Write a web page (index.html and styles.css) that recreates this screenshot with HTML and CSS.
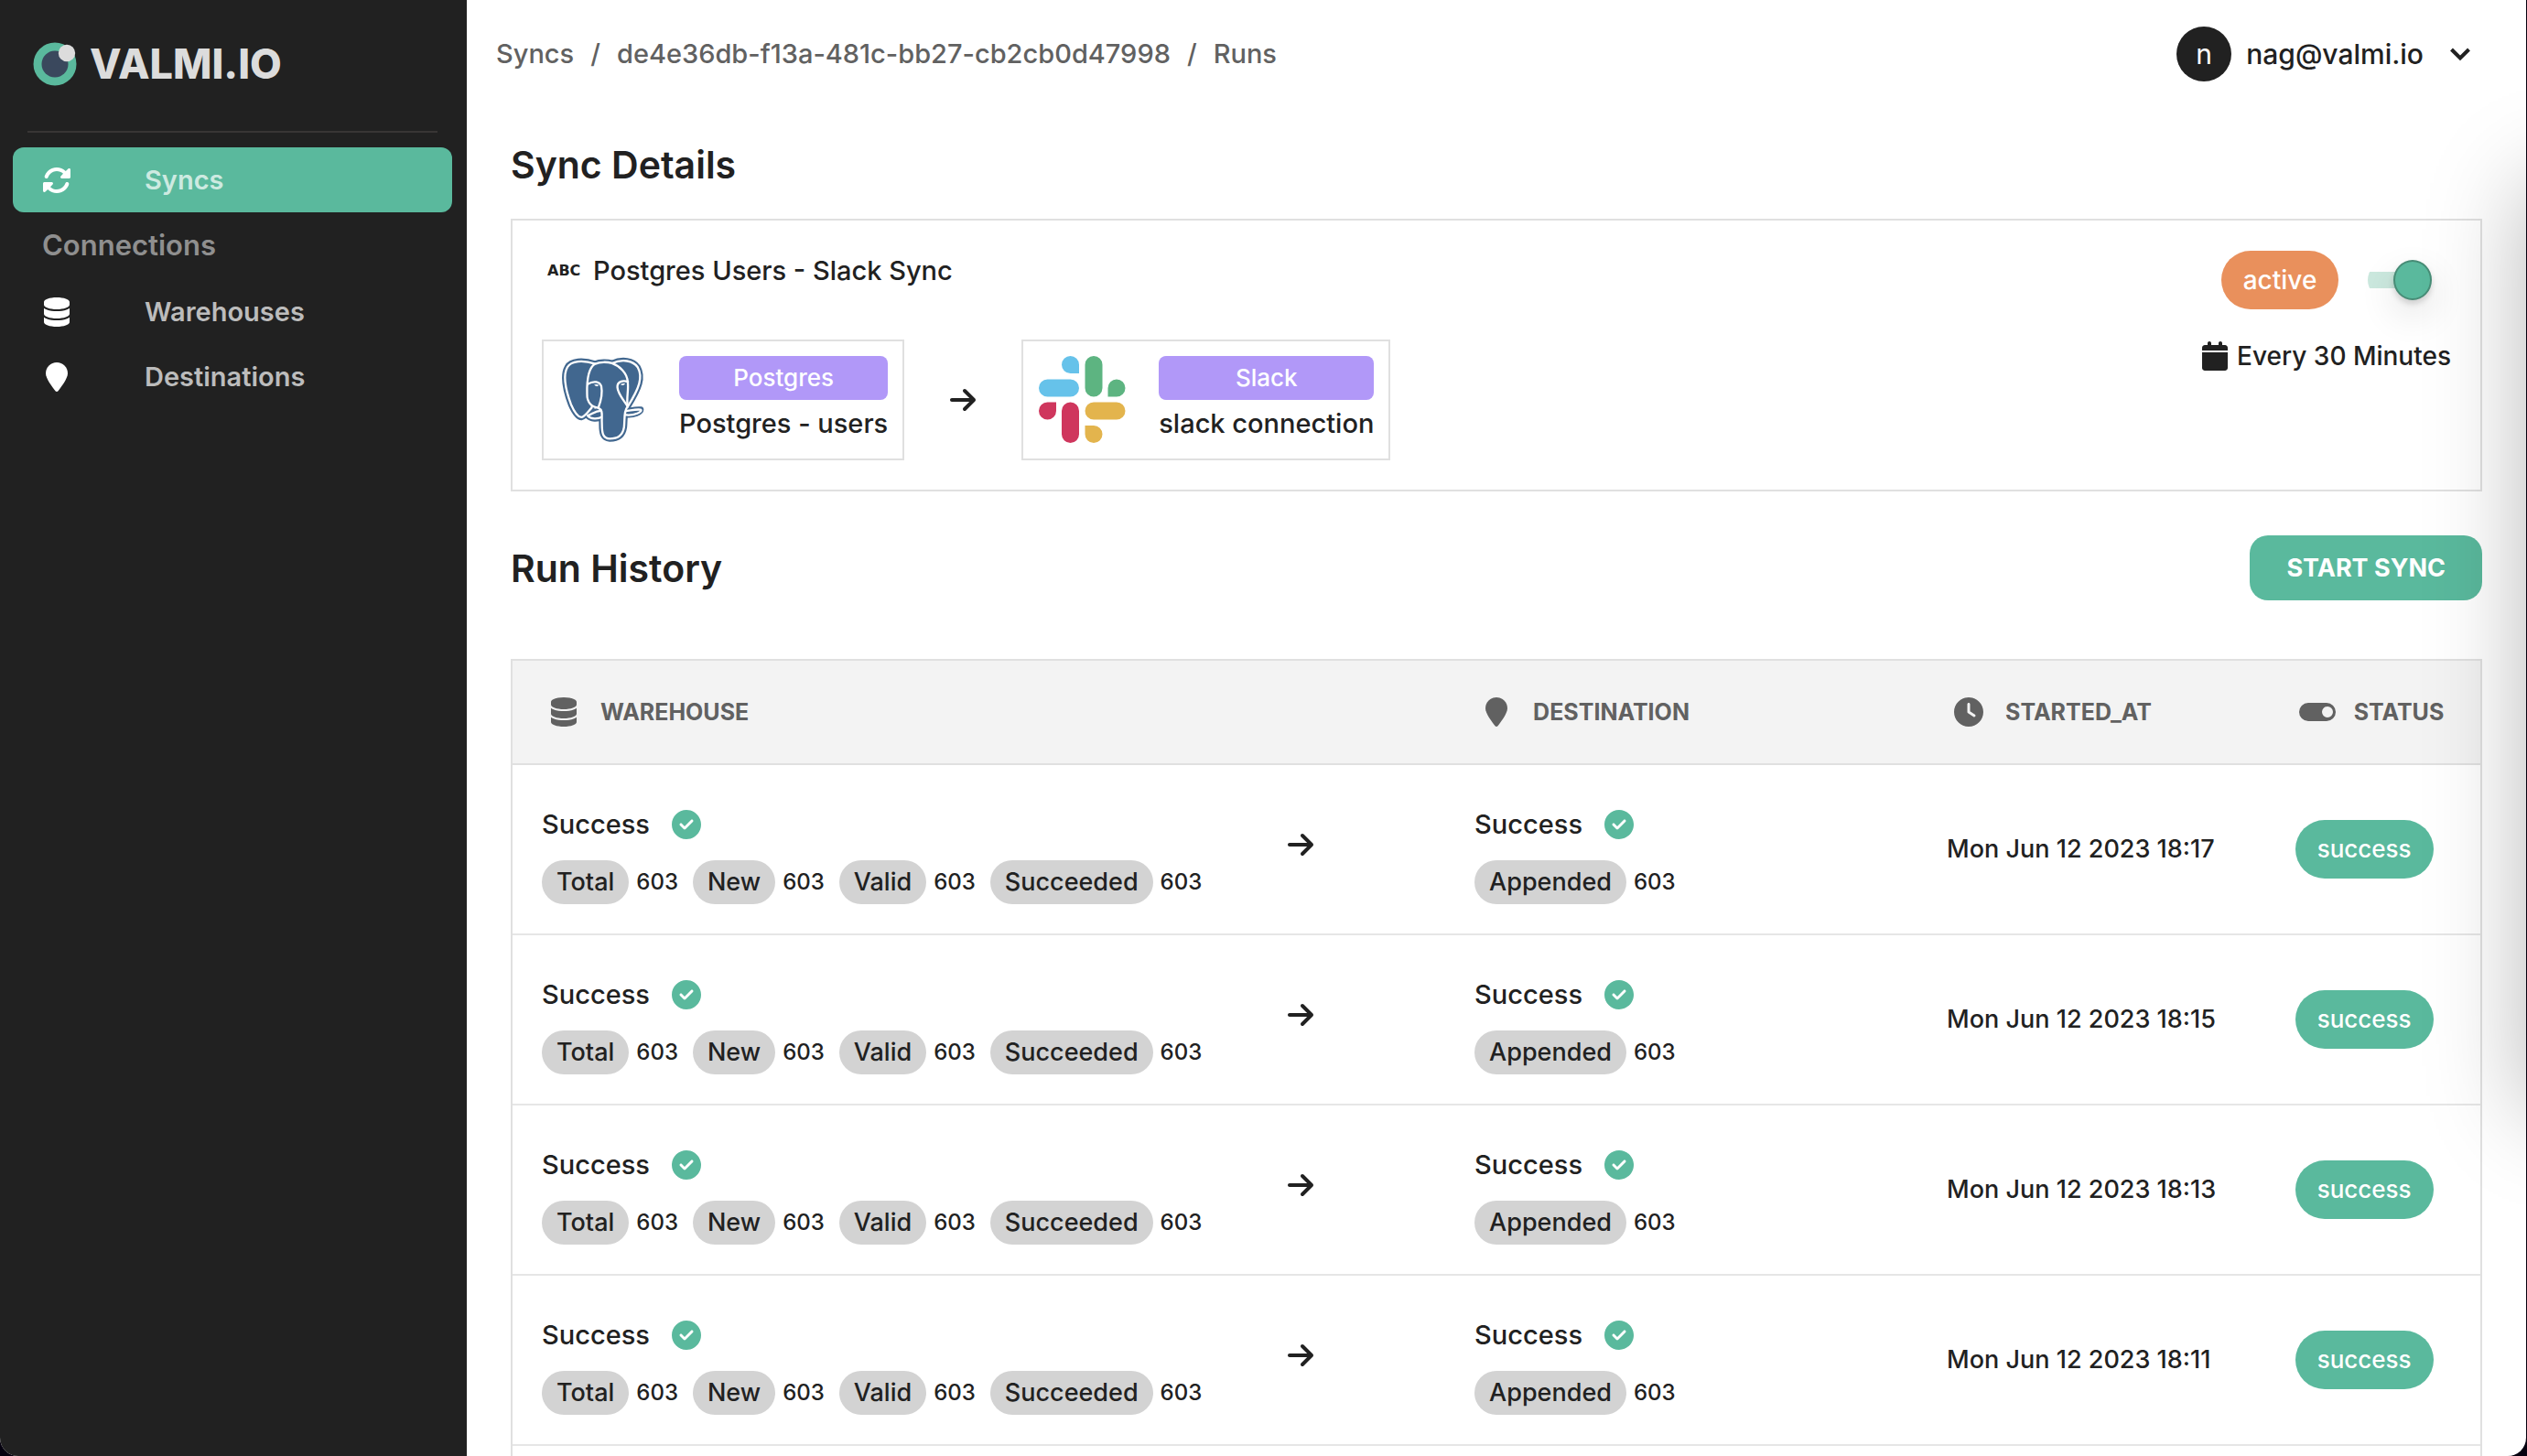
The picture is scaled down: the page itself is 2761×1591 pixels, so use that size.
FILE: index.html
```html
<!DOCTYPE html>
<html lang="en">
<head>
  <meta charset="UTF-8">
  <meta name="viewport" content="width=device-width, initial-scale=1.0">
  <title>valmi.io</title>
  <link rel="stylesheet" href="styles.css">
</head>
<body>

  <!-- icon sprite -->
  <svg class="sprite">
    <symbol id="icon-sync" viewBox="0 0 512 512">
      <path d="M142.9 142.9c62.2-62.2 162.7-62.5 225.3-1L327 183c-6.9 6.9-8.9 17.2-5.2 26.2s12.5 14.8 22.2 14.8H472c13.3 0 24-10.7 24-24V72c0-9.7-5.8-18.5-14.8-22.2s-19.3-1.7-26.2 5.2L413.4 96.6c-87.6-86.5-228.7-86.2-315.8 1C73.2 122 55.6 150.7 44.8 181.4c-5.9 16.7 2.9 34.9 19.5 40.8s34.9-2.9 40.8-19.5c7.7-21.8 20.2-42.3 37.8-59.8zM16 312V440c0 9.7 5.8 18.5 14.8 22.2s19.3 1.7 26.2-5.2l41.6-41.6c87.6 86.5 228.7 86.2 315.8-1c24.4-24.4 42.1-53.1 52.9-83.7c5.9-16.7-2.9-34.9-19.5-40.8s-34.9 2.9-40.8 19.5c-7.7 21.8-20.2 42.3-37.8 59.8c-62.2 62.2-162.7 62.5-225.3 1L185 329c6.9-6.9 8.9-17.2 5.2-26.2s-12.5-14.8-22.2-14.8H40c-13.3 0-24 10.7-24 24z"/>
    </symbol>
    <symbol id="icon-database" viewBox="0 0 448 512">
      <path d="M448 80v48c0 44.2-100.3 80-224 80S0 172.2 0 128V80C0 35.8 100.3 0 224 0S448 35.8 448 80zM393.2 214.7c20.8-7.4 39.9-16.9 54.8-28.6V288c0 44.2-100.3 80-224 80S0 332.2 0 288V186.1c14.9 11.8 34 21.2 54.8 28.6C99.7 230.7 159.5 240 224 240s124.3-9.3 169.2-25.3zM0 346.1c14.9 11.8 34 21.2 54.8 28.6C99.7 390.7 159.5 400 224 400s124.3-9.3 169.2-25.3c20.8-7.4 39.9-16.9 54.8-28.6V432c0 44.2-100.3 80-224 80S0 476.2 0 432V346.1z"/>
    </symbol>
    <symbol id="icon-pin" viewBox="0 0 384 512">
      <path d="M384 192c0 87.4-117 243-168.3 307.2c-12.3 15.3-35.1 15.3-47.4 0C117 435 0 279.4 0 192C0 86 86 0 192 0S384 86 384 192z"/>
    </symbol>
    <symbol id="icon-arrow" viewBox="0 0 448 512">
      <path d="M438.6 278.6c12.5-12.5 12.5-32.8 0-45.3l-160-160c-12.5-12.5-32.8-12.5-45.3 0s-12.5 32.8 0 45.3L338.8 224 32 224c-17.7 0-32 14.3-32 32s14.3 32 32 32l306.7 0L233.4 393.4c-12.5 12.5-12.5 32.8 0 45.3s32.8 12.5 45.3 0l160-160z"/>
    </symbol>
    <symbol id="icon-calendar" viewBox="0 0 448 512">
      <path d="M96 32V64H48C21.5 64 0 85.5 0 112v48H448V112c0-26.5-21.5-48-48-48H352V32c0-17.7-14.3-32-32-32s-32 14.3-32 32V64H160V32c0-17.7-14.3-32-32-32S96 14.3 96 32zM448 192H0V464c0 26.5 21.5 48 48 48H400c26.5 0 48-21.5 48-48V192z"/>
    </symbol>
    <symbol id="icon-clock" viewBox="0 0 512 512">
      <path fill-rule="evenodd" d="M256 512C114.6 512 0 397.4 0 256S114.6 0 256 0S512 114.6 512 256s-114.6 256-256 256zM232 120V256c0 8 4 15.5 10.7 20l96 64c11 7.4 25.9 4.4 33.3-6.7s4.4-25.9-6.7-33.3L280 243.2V120c0-13.3-10.7-24-24-24s-24 10.7-24 24z"/>
    </symbol>
    <symbol id="icon-toggle" viewBox="0 0 40 32">
      <path fill-rule="evenodd" d="M10 6H30a10 10 0 0 1 0 20H10a10 10 0 0 1 0-20zM31 10a6 6 0 1 0 0 12a6 6 0 1 0 0-12z"/>
    </symbol>
    <symbol id="icon-check" viewBox="0 0 512 512">
      <path fill-rule="evenodd" d="M256 512c141.4 0 256-114.6 256-256S397.4 0 256 0S0 114.6 0 256S114.6 512 256 512zM369 209L241 337c-9.4 9.4-24.6 9.4-33.9 0l-64-64c-9.4-9.4-9.4-24.6 0-33.9s24.6-9.4 33.9 0l47 47L335 175c9.4-9.4 24.6-9.4 33.9 0s9.4 24.6 0 33.9z"/>
    </symbol>
  </svg>

  <div class="window">
    <aside class="sidebar">
      <a class="logo" href="#">
        <svg class="logo-mark" viewBox="0 0 48 48">
          <circle cx="24" cy="24" r="23.5" fill="#5ab99d"/>
          <circle cx="24" cy="24" r="14.5" fill="#3a485d"/>
          <circle cx="37" cy="12" r="9.2" fill="#dcdcdc"/>
        </svg>
        <span class="logo-text">VALMI.IO</span>
      </a>

      <nav class="menu">
        <a class="menu-item active" href="#">
          <span class="menu-icon"><svg class="icon"><use href="#icon-sync"/></svg></span>
          Syncs
        </a>
        <p class="menu-title">Connections</p>
        <a class="menu-item" href="#">
          <span class="menu-icon"><svg class="icon icon-28"><use href="#icon-database"/></svg></span>
          Warehouses
        </a>
        <a class="menu-item" href="#">
          <span class="menu-icon"><svg class="icon icon-24"><use href="#icon-pin"/></svg></span>
          Destinations
        </a>
      </nav>
    </aside>

    <div class="page">
      <header class="topbar">
        <nav class="breadcrumb">
          <a href="#">Syncs</a>
          <span>/</span>
          <a href="#">de4e36db-f13a-481c-bb27-cb2cb0d47998</a>
          <span>/</span>
          <a href="#">Runs</a>
        </nav>
        <button class="account">
          <span class="avatar">n</span>
          nag@valmi.io
          <svg class="chevron" viewBox="0 0 24 24"><path d="M2.500 7L12 16.500L21.500 7"/></svg>
        </button>
      </header>

      <main class="content">
        <h2>Sync Details</h2>

        <section class="card">
          <div>
            <p class="sync-name"><span class="abc">ABC</span>Postgres Users - Slack Sync</p>
            <div class="flow">
              <div class="connector">
                <svg class="connector-logo" viewBox="208 475 290 290">
                  <g fill="#41678f" stroke="#41678f" stroke-width="20" stroke-linejoin="round">
                    <path d="M330 501C290 488 250 490 238 512C222 540 234 592 250 635C262 662 275 678 285 677C295 675 305 660 318 646L330 600Z"/>
                    <path d="M385 499C420 484 455 490 470 512C488 545 476 580 437 642L410 600Z"/>
                    <path d="M330 501C345 494 370 494 385 499C410 503 435 530 437 560L437 642C424 655 428 680 425 710C420 742 400 748 378 748C355 746 352 730 352 700V655L305 600C300 560 305 515 330 501Z"/>
                    <path d="M305 672C320 668 325 656 353 655V676C338 684 315 684 305 672ZM428 657C445 656 460 650 480 652C480 660 460 672 428 668Z"/>
                  </g>
                  <g fill="#41678f" stroke="#fff" stroke-width="7" stroke-linejoin="round" stroke-linecap="round">
                    <path d="M385 499C420 484 455 490 470 512C488 545 476 580 437 642L410 600Z"/>
                    <path d="M330 501C290 488 250 490 238 512C222 540 234 592 250 635C262 662 275 678 285 677C295 675 305 660 318 646L330 600Z"/>
                    <path d="M305 672C320 668 325 656 353 655V676C338 684 315 684 305 672Z"/>
                    <path d="M428 657C445 656 460 650 480 652C488 658 460 674 426 669Z"/>
                    <path d="M330 501C345 494 370 494 385 499C410 508 435 530 437 560C441 590 432 610 437 642C424 655 428 680 425 710C420 742 400 748 378 748C355 746 352 730 352 700C350 672 358 655 340 646C320 644 302 630 303 600C302 560 305 515 330 501Z"/>
                    <path d="M305 568C325 555 345 560 350 575C355 600 350 620 340 646M438 560C420 554 402 560 403 578C404 600 425 622 437 642" fill="none"/>
                  </g>
                  <path d="M326 570Q334 567 342 571Q336 580 326 570ZM413 569Q421 564 429 566Q423 576 413 569Z" fill="#fff"/>
                </svg>
                <div class="connector-info">
                  <span class="tag">Postgres</span>
                  <span>Postgres - users</span>
                </div>
              </div>

              <svg class="icon icon-28"><use href="#icon-arrow"/></svg>

              <div class="connector">
                <svg class="connector-logo" viewBox="-1 0 96 96">
                  <path fill="#66c2ea" d="M44 19H34.500A9.500 9.500 0 1 1 44 9.500ZM9.500 25.500H34.500a9.500 9.500 0 0 1 0 19H9.500a9.500 9.500 0 0 1 0-19Z"/>
                  <path fill="#5db481" d="M50.500 9.500a9.500 9.500 0 0 1 19 0V35a9.500 9.500 0 0 1-19 0ZM75.500 44.500V35A9.500 9.500 0 1 1 85 44.500Z"/>
                  <path fill="#cf365d" d="M19 50.500V60A9.500 9.500 0 1 1 9.500 50.500ZM25 60a9.500 9.500 0 0 1 19 0V85.500a9.500 9.500 0 0 1-19 0Z"/>
                  <path fill="#e3b44d" d="M60 50.500H85a9.500 9.500 0 0 1 0 19H60a9.500 9.500 0 0 1 0-19ZM50.500 76H60A9.500 9.500 0 1 1 50.500 85.500Z"/>
                </svg>
                <div class="connector-info">
                  <span class="tag">Slack</span>
                  <span>slack connection</span>
                </div>
              </div>
            </div>
          </div>

          <div class="schedule">
            <div class="sync-state">
              <label class="pill pill-active" for="syncToggle">active</label>
              <input class="switch" type="checkbox" id="syncToggle" checked>
            </div>
            <p class="interval"><svg class="icon icon-28"><use href="#icon-calendar"/></svg>Every 30 Minutes</p>
          </div>
        </section>

        <div class="history-head">
          <h2>Run History</h2>
          <button class="btn">START SYNC</button>
        </div>

        <div class="table-wrap">
          <table class="runs">
            <thead>
              <tr>
                <th class="col-warehouse"><div class="th"><span class="th-icon"><svg class="icon icon-28"><use href="#icon-database"/></svg></span>WAREHOUSE</div></th>
                <th class="col-destination"><div class="th"><span class="th-icon"><svg class="icon icon-24"><use href="#icon-pin"/></svg></span>DESTINATION</div></th>
                <th class="col-started"><div class="th"><span class="th-icon"><svg class="icon"><use href="#icon-clock"/></svg></span>STARTED_AT</div></th>
                <th class="col-status"><div class="th"><span class="th-icon"><svg class="icon icon-40"><use href="#icon-toggle"/></svg></span>STATUS</div></th>
              </tr>
            </thead>
            <tbody id="runList"></tbody>
          </table>
        </div>
      </main>
    </div>

    <div class="drawer"></div>
  </div>

  <script>
    const runList = document.getElementById('runList');

    const runs = [
      { startedAt: 'Mon Jun 12 2023 18:17', status: 'success', records: 603 },
      { startedAt: 'Mon Jun 12 2023 18:15', status: 'success', records: 603 },
      { startedAt: 'Mon Jun 12 2023 18:13', status: 'success', records: 603 },
      { startedAt: 'Mon Jun 12 2023 18:11', status: 'success', records: 603 }
    ];

    function metrics(names, count) {
      const items = names.map(name =>
        `<span class="metric"><span class="chip">${name}</span>${count}</span>`);
      return `
        <div class="result">
          <p class="result-title">Success<svg class="icon check"><use href="#icon-check"/></svg></p>
          <div class="metrics">${items.join('')}</div>
        </div>`;
    }

    function addRun(run) {
      const row = document.createElement('tr');
      row.innerHTML = `
        <td><div class="source">
          ${metrics(['Total', 'New', 'Valid', 'Succeeded'], run.records)}
          <svg class="icon icon-28"><use href="#icon-arrow"/></svg>
        </div></td>
        <td>${metrics(['Appended'], run.records)}</td>
        <td class="started">${run.startedAt}</td>
        <td><span class="pill">${run.status}</span></td>`;
      runList.append(row);
    }

    runs.forEach(addRun);
  </script>
</body>
</html>
```
FILE: styles.css
```css
:root {
  --dark: #212121;
  --green: #5ab99d;
  --orange: #e9905c;
  --purple: #b198f8;
  --muted: #616161;
  --border: #e0e0e0;
}

* {
  box-sizing: border-box;
}

body {
  margin: 0;
  background: #05010f;
  color: var(--dark);
  font-family: Inter, sans-serif;
  font-size: 29px;
  font-weight: 500;
  line-height: 42px;
}

h2, p {
  margin: 0;
}

h2 {
  font-size: 41px;
  font-weight: 600;
  line-height: 60px;
}

a {
  color: inherit;
  text-decoration: none;
}

button {
  border: none;
  font: inherit;
  cursor: pointer;
}

.sprite {
  display: none;
}

.icon {
  flex: none;
  width: 32px;
  height: 32px;
  fill: currentColor;
}

.icon-24 {
  width: 24px;
}

.icon-28 {
  width: 28px;
}

.icon-40 {
  width: 40px;
}

.window {
  position: relative;
  display: flex;
  height: 100vh;
  margin-right: 1px;
  overflow: hidden;
  background: #fff;
  border-radius: 0 0 20px 20px;
}

/* sidebar */

.sidebar {
  flex: none;
  width: 510px;
  padding: 0 16px 0 14px;
  background: var(--dark);
}

.logo {
  display: flex;
  align-items: center;
  gap: 14px;
  height: 145px;
  margin: 0 16px 16px;
  padding: 0 6px 4px;
  border-bottom: 2px solid #383635;
}

.logo-mark {
  width: 48px;
  height: 48px;
}

.logo-text {
  color: #dcdcdc;
  font-size: 45px;
  font-weight: 800;
}

.menu-item {
  display: flex;
  align-items: center;
  height: 71px;
  padding-left: 32px;
  border-radius: 12px;
  color: #bcbcbc;
  font-weight: 600;
}

.menu-item.active {
  background: var(--green);
  color: #cdeae1;
}

.menu-icon {
  display: flex;
  justify-content: center;
  width: 32px;
  margin-right: 80px;
  color: #fff;
}

.menu-title {
  padding: 15px 32px 16px;
  color: #8f8f8f;
  font-size: 31px;
  font-weight: 600;
}

/* top bar */

.page {
  flex: 1;
  min-width: 0;
}

.topbar {
  display: flex;
  align-items: center;
  justify-content: space-between;
  height: 118px;
  padding: 0 60px 0 32px;
}

.breadcrumb {
  display: flex;
  gap: 18px;
  color: var(--muted);
}

.account {
  display: flex;
  align-items: center;
  padding: 0;
  background: none;
  color: var(--dark);
  font-size: 30px;
}

.avatar {
  width: 60px;
  margin-right: 16px;
  border-radius: 50%;
  background: var(--dark);
  color: #fff;
  font-weight: 400;
  line-height: 60px;
}

.chevron {
  width: 24px;
  height: 24px;
  margin-left: 28px;
  fill: none;
  stroke: var(--dark);
  stroke-width: 4;
}

.content {
  padding: 32px 48px;
}

/* sync details */

.card {
  display: flex;
  justify-content: space-between;
  margin: 29px 0 48px;
  padding: 33px 32px 32px;
  border: 2px solid var(--border);
}

.sync-name {
  display: flex;
  align-items: center;
  margin-bottom: 53px;
  line-height: 44px;
}

.abc {
  width: 56px;
  padding-left: 6px;
  font-family: "DejaVu Sans", sans-serif;
  font-size: 16px;
  font-weight: 700;
}

.flow {
  display: flex;
  align-items: center;
  gap: 50px;
}

.connector {
  display: flex;
  gap: 36px;
  padding: 16px 16px 12px;
  border: 2px solid var(--border);
}

.connector-logo {
  width: 96px;
  height: 96px;
}

.connector-info {
  display: flex;
  flex-direction: column;
  line-height: 52px;
}

.tag {
  border-radius: 8px;
  background: var(--purple);
  color: #fff;
  font-size: 26px;
  line-height: 48px;
  text-align: center;
}

.schedule {
  display: flex;
  flex-direction: column;
  align-items: center;
  gap: 30px;
}

.sync-state {
  display: flex;
  align-items: center;
  gap: 32px;
}

.pill {
  display: inline-block;
  padding: 0 24px;
  border-radius: 32px;
  background: var(--green);
  color: #fff;
  font-size: 26px;
  line-height: 64px;
}

.pill-active {
  background: var(--orange);
  font-size: 28px;
}

.switch {
  appearance: none;
  display: flex;
  align-items: center;
  width: 70px;
  height: 40px;
  margin: 0;
  background: linear-gradient(#cbe8de, #cbe8de) 0 50% / 60px 18px no-repeat;
  border-radius: 20px 0 0 20px;
  cursor: pointer;
}

.switch::before {
  content: "";
  width: 40px;
  height: 40px;
  border: 2px solid #478c76;
  border-radius: 50%;
  background: var(--green);
  box-shadow: 0 4px 6px rgba(0, 0, 0, 0.15), 0 16px 40px rgba(0, 0, 0, 0.12);
}

.switch:checked::before {
  margin-left: 28px;
}

.interval {
  display: flex;
  align-items: center;
  gap: 10px;
  font-size: 28px;
}

/* run history */

.history-head {
  display: flex;
  align-items: center;
  justify-content: space-between;
  margin-bottom: 64px;
}

.btn {
  height: 71px;
  padding: 0 40px;
  border-radius: 20px;
  background: var(--green);
  color: #fff;
  font-size: 27px;
  font-weight: 700;
}

.table-wrap {
  padding-bottom: 64px;
  border: 2px solid var(--border);
}

.runs {
  width: 100%;
  table-layout: fixed;
  border-spacing: 0;
}

.runs th {
  height: 114px;
  padding: 0 32px;
  border-bottom: 2px solid var(--border);
  background: #f3f3f3;
  color: var(--muted);
  font-size: 25px;
  font-weight: 700;
  text-align: left;
}

.col-warehouse {
  width: 47.4%;
}

.col-destination {
  width: 24%;
}

.col-started {
  width: 17.7%;
}

.th {
  display: flex;
  align-items: center;
}

.th-icon {
  display: flex;
  justify-content: center;
  min-width: 48px;
  margin-right: 16px;
}

.runs td {
  height: 186px;
  padding: 32px;
  border-bottom: 2px solid #e6e6e6;
  white-space: nowrap;
}

.runs .started {
  font-size: 27px;
}

.source {
  display: flex;
  align-items: center;
  justify-content: space-between;
  padding-right: 112px;
}

.source > .icon {
  margin-bottom: 10px;
}

.result {
  padding-top: 12px;
}

.result-title {
  display: flex;
  align-items: center;
  gap: 24px;
  margin-bottom: 18px;
}

.check {
  color: var(--green);
}

.metrics {
  display: flex;
  gap: 16px;
}

.metric {
  display: flex;
  align-items: center;
  gap: 8px;
  font-size: 24px;
}

.chip {
  padding: 0 16px;
  border-radius: 24px;
  background: #d3d3d3;
  font-size: 27px;
  line-height: 48px;
}

/* closed drawer, parked past the right edge */

.drawer {
  position: absolute;
  top: 200px;
  bottom: 376px;
  left: 100%;
  width: 400px;
  box-shadow: 0 0 100px rgba(0, 0, 0, 0.28);
}
```
